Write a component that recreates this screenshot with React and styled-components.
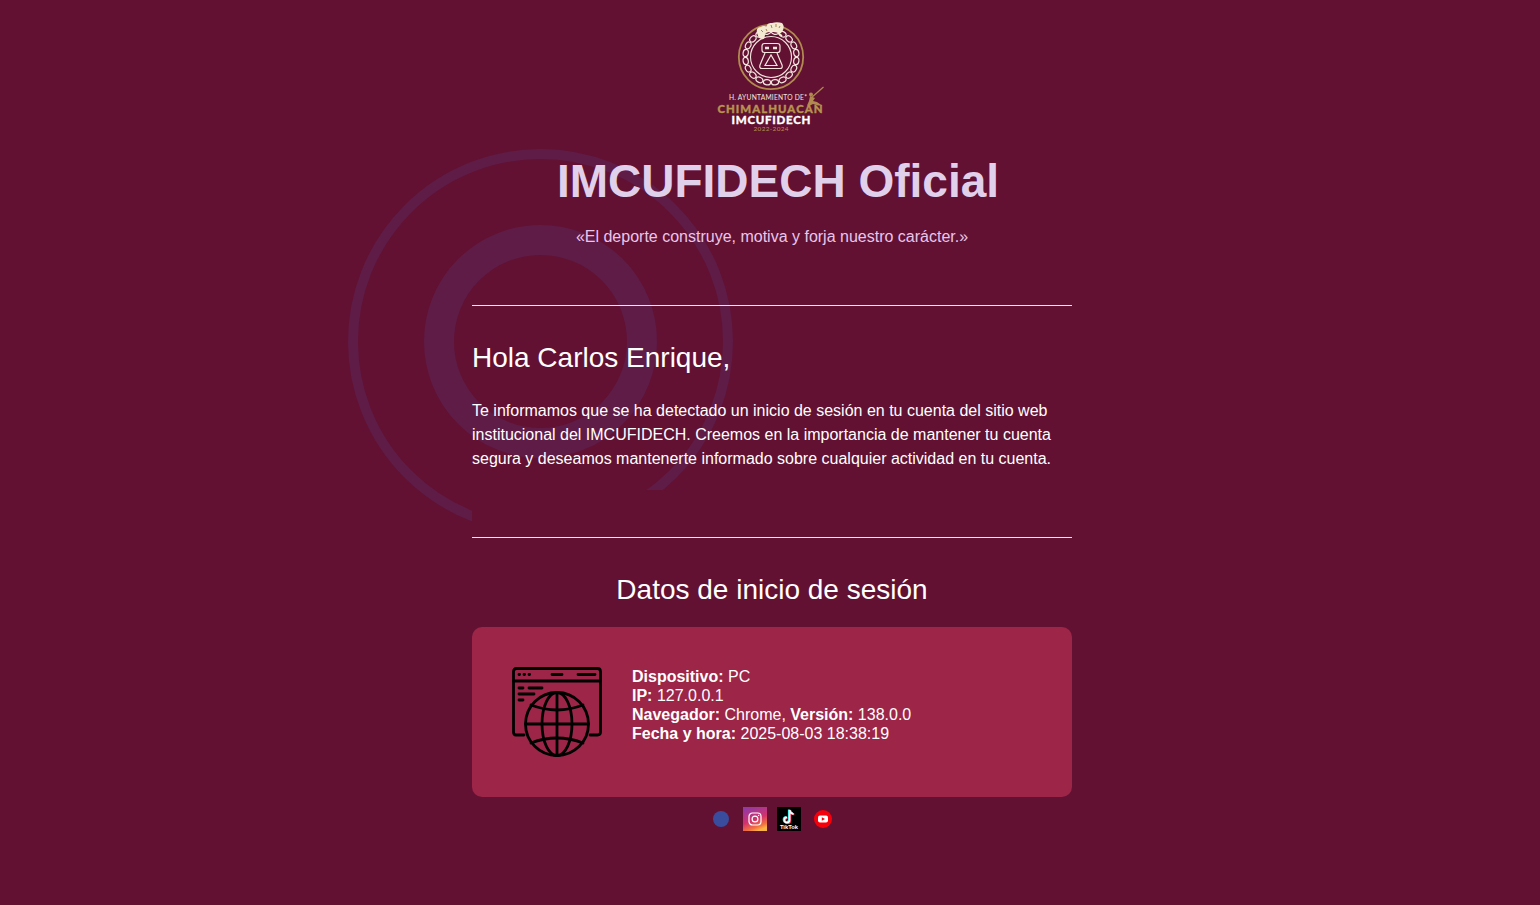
import React from 'react';
import styled, { createGlobalStyle } from 'styled-components';

const GlobalStyle = createGlobalStyle`
  html, body {
    margin: 0;
    padding: 0;
    background: #621132;
  }
  body {
    font-family: "Liberation Sans", Arial, sans-serif;
    color: #fff;
  }
`;

const LOGIN_ROWS = [
  [['Dispositivo:', ' PC']],
  [['IP:', ' 127.0.0.1']],
  [['Navegador:', ' Chrome, '], ['Versión:', ' 138.0.0']],
  [['Fecha y hora:', ' 2025-08-03 18:38:19']],
];

const CHAIN = Array.from({ length: 20 }, (_, i) => ((i + 0.5) * 2 * Math.PI) / 20);

const Logo = () => (
  <LogoSvg viewBox="0 0 110 114" aria-label="H. Ayuntamiento de Chimalhuacán">
    <circle cx="55" cy="37" r="32.2" fill="none" stroke="#b08a4e" strokeWidth="1.8" />
    <circle cx="55" cy="37" r="20.5" fill="none" stroke="#f3e6df" strokeWidth="1.1" />
    {CHAIN.map(a => (
      <ellipse
        key={a}
        cx={55 + 25.6 * Math.cos(a)}
        cy={37 + 25.6 * Math.sin(a)}
        rx="3.6"
        ry="2.6"
        fill="#621132"
        stroke="#f3e6df"
        strokeWidth="1.2"
        transform={`rotate(${(a * 180) / Math.PI + 90} ${55 + 25.6 * Math.cos(a)} ${37 + 25.6 * Math.sin(a)})`}
      />
    ))}
    {/* jaguar resting on the ring */}
    <path
      d="M41 13 C40 9 42 7 45 7 C47 5 49 7 51 6 C51 3 54 3 56 3 C59 2 63 2 66 3 C68 5 68 8 67 10 C66 13 64 14 62 13 C60 12 58 12 56 12 C53 12 51 12 49 14 C49 17 48 20 46 19 C43 19 42 16 41 13 Z"
      fill="#f4ead2"
    />
    <path d="M45 10 l2 2 M50 9 l1 2 M55 5 l1 3 M60 4 l0 3 M64 6 l-1 2" stroke="#a8834c" strokeWidth="1" />
    <path d="M62 13 L66 16" stroke="#f4ead2" strokeWidth="1.6" />
    <rect x="46" y="23.5" width="18" height="9" rx="2.6" fill="none" stroke="#f3e6df" strokeWidth="1.2" />
    <path d="M49 28 h4 M57 28 h4" stroke="#f3e6df" strokeWidth="2.4" />
    <path d="M49 33 L44 45 Q43 48.5 46 48.5 H64 Q67 48.5 66 45 L61 33" fill="none" stroke="#f3e6df" strokeWidth="1.2" />
    <path d="M55 35 L49 45.5 H61 Z" fill="none" stroke="#f3e6df" strokeWidth="1.2" />
    {/* figure with the pole, right of the name */}
    <path d="M107.5 67 L95 78" stroke="#b08a4e" strokeWidth="1.2" />
    <circle cx="95" cy="74.5" r="2" fill="#b08a4e" />
    <path d="M94 76 L99 78 L97 81 L101 82 L106 85.5 L102 85.5 L97 84 L94 85.5 L91 85.5 L93 81 Z" fill="#b08a4e" />
    <LogoText x="52" y="79.5" fontSize="6.7" fontWeight="400" fill="#f3e6df" textLength="78">
      H. AYUNTAMIENTO DE*
    </LogoText>
    <LogoText x="54" y="93" fontSize="11.4" fontWeight="900" fill="#b8924f" stroke="#b8924f" strokeWidth="0.35" textLength="105">
      CHIMALHUACAN
    </LogoText>
    <LogoText x="55" y="104" fontSize="11.5" fontWeight="900" fill="#ffffff" stroke="#ffffff" strokeWidth="0.3" textLength="79">
      IMCUFIDECH
    </LogoText>
    <LogoText x="55" y="111" fontSize="6.4" fontWeight="400" fill="#b8924f" textLength="35">
      2022-2024
    </LogoText>
  </LogoSvg>
);

const BrowserGlobe = () => (
  <GlobeSvg viewBox="0 0 90 92" fill="none" stroke="#000" strokeWidth="2.8" strokeLinecap="round">
    <path d="M12 69 H4 Q1.5 69 1.5 66 V5.5 Q1.5 2.5 4.5 2.5 H85.5 Q88.5 2.5 88.5 5.5 V66 Q88.5 69 85.5 69 H78" />
    <path d="M1.5 15 H88.5" />
    <path d="M7 8.5 H7.6 M12 8.5 H12.6 M17 8.5 H17.6 M40 8.5 H50 M66 8.5 H83" />
    <path d="M7 22 H11 M17 22 H30 M7 28 H22 M7 34 H11" />
    <circle cx="45" cy="58" r="31.5" />
    <ellipse cx="45" cy="58" rx="15" ry="31.5" />
    <path d="M45 26.5 V89.5 M13.5 58 H76.5" />
    <path d="M19 39 Q45 49 71 39 M19 77 Q45 67 71 77" />
  </GlobeSvg>
);

const Facebook = () => (
  <svg width="24" height="24" viewBox="0 0 24 24">
    <circle cx="12" cy="12" r="8" fill="#3a4c9e" />
  </svg>
);

const Instagram = () => (
  <svg width="24" height="24" viewBox="0 0 24 24">
    <defs>
      <linearGradient id="igGrad" x1="0.2" y1="0" x2="0.6" y2="1">
        <stop offset="0" stopColor="#8f3aa6" />
        <stop offset="0.55" stopColor="#d2326d" />
        <stop offset="0.85" stopColor="#f2733f" />
        <stop offset="1" stopColor="#fbb245" />
      </linearGradient>
    </defs>
    <rect width="24" height="24" fill="url(#igGrad)" />
    <rect x="6" y="6" width="12" height="12" rx="3.4" fill="none" stroke="#fff" strokeWidth="1.2" />
    <circle cx="12" cy="12" r="2.9" fill="none" stroke="#fff" strokeWidth="1.2" />
    <circle cx="15.6" cy="8.4" r="0.7" fill="#fff" />
  </svg>
);

const TikTok = () => (
  <svg width="24" height="24" viewBox="0 0 24 24">
    <rect width="24" height="24" fill="#000" />
    <path
      d="M12.6 3 V13 A2.6 2.6 0 1 1 10 10.4 M12.6 3 Q13.4 6.6 16.6 7"
      fill="none"
      stroke="#25f4ee"
      strokeWidth="2"
      transform="translate(-0.7 -0.4)"
    />
    <path
      d="M12.6 3 V13 A2.6 2.6 0 1 1 10 10.4 M12.6 3 Q13.4 6.6 16.6 7"
      fill="none"
      stroke="#fe2c55"
      strokeWidth="2"
      transform="translate(0.7 0.4)"
    />
    <path d="M12.6 3 V13 A2.6 2.6 0 1 1 10 10.4 M12.6 3 Q13.4 6.6 16.6 7" fill="none" stroke="#fff" strokeWidth="1.6" />
    <TikTokText x="12" y="22" fontSize="5.8" fontWeight="700" fill="#fff">
      TikTok
    </TikTokText>
  </svg>
);

const Youtube = () => (
  <svg width="24" height="24" viewBox="0 0 24 24">
    <circle cx="12" cy="12" r="9" fill="#f5000a" />
    <rect x="7" y="8.5" width="10" height="7" rx="2" fill="#fff" />
    <path d="M10.8 10.2 L14 12 L10.8 13.8 Z" fill="#f5000a" />
  </svg>
);

export default function App() {
  return (
    <Page>
      <GlobalStyle />
      <Shell>
        <Watermark viewBox="0 0 385 385" fill="none" stroke="#5f1c47">
          <circle cx="192.5" cy="192.5" r="187.5" strokeWidth="10" />
          <circle cx="192.5" cy="192.5" r="101.5" strokeWidth="30" />
        </Watermark>
        <Intro>
          <LogoRow>
            <Logo />
          </LogoRow>
          <Title>IMCUFIDECH Oficial</Title>
          <Quote>«El deporte construye, motiva y forja nuestro carácter.»</Quote>
          <Rule $spaced />
          <Greeting>Hola Carlos Enrique,</Greeting>
          <Message>
            Te informamos que se ha detectado un inicio de sesión en tu cuenta del sitio web
            institucional del IMCUFIDECH. Creemos en la importancia de mantener tu cuenta
            segura y deseamos mantenerte informado sobre cualquier actividad en tu cuenta.
          </Message>
        </Intro>
        <Details>
          <Rule />
          <DetailsTitle>Datos de inicio de sesión</DetailsTitle>
          <Card>
            <BrowserGlobe />
            <Info>
              {LOGIN_ROWS.map(row => (
                <div key={row[0][0]}>
                  {row.map(([label, value]) => (
                    <React.Fragment key={label}>
                      <strong>{label}</strong>
                      {value}
                    </React.Fragment>
                  ))}
                </div>
              ))}
            </Info>
          </Card>
          <Socials>
            <Facebook />
            <Instagram />
            <TikTok />
            <Youtube />
          </Socials>
        </Details>
      </Shell>
    </Page>
  );
}

const Page = styled.div`
  display: flex;
  justify-content: center;
  min-height: 905px;
  padding-left: 4px;
  box-sizing: border-box;
  overflow: hidden;
`;

const Shell = styled.div`
  position: relative;
  width: 600px;
`;

const Watermark = styled.svg`
  position: absolute;
  left: -124px;
  top: 149px;
  width: 385px;
  height: 385px;
`;

const Intro = styled.section`
  position: relative;
  height: 490px;
  padding-top: 20px;
  box-sizing: border-box;
`;

const LogoRow = styled.div`
  display: flex;
  justify-content: center;
  height: 114px;
`;

const LogoSvg = styled.svg`
  width: 110px;
  height: 114px;
  margin-left: -3px;
`;

const LogoText = styled.text`
  font-family: Lato, "Open Sans", sans-serif;
  text-anchor: middle;
`;

const Title = styled.h1`
  margin: 21px 0 0 12px;
  font-size: 46px;
  line-height: 53px;
  font-weight: 700;
  text-align: center;
  color: #e1d0ec;
`;

const Quote = styled.p`
  margin: 20px 0 0;
  font-size: 16px;
  line-height: 18px;
  text-align: center;
  color: #e8c6ec;
`;

const Rule = styled.hr`
  margin: ${({ $spaced }) => ($spaced ? '59px 0 0' : '0')};
  border: 0;
  height: 1px;
  background: #f3e6ec;
`;

const Greeting = styled.h2`
  margin: 36px 0 0;
  font-size: 28px;
  line-height: 32px;
  font-weight: 400;
  color: #fff;
`;

const Message = styled.p`
  margin: 25px 0 0;
  font-size: 16px;
  line-height: 24px;
  color: #fff;
`;

const Details = styled.section`
  position: relative;
  padding-top: 47px;
  background: #621132;
`;

const DetailsTitle = styled.h2`
  margin: 36px 0 0;
  font-size: 28px;
  line-height: 32px;
  font-weight: 400;
  text-align: center;
  color: #fff;
`;

const Card = styled.div`
  display: flex;
  align-items: center;
  gap: 30px;
  box-sizing: border-box;
  height: 170px;
  margin-top: 21px;
  padding: 0 40px;
  border-radius: 10px;
  background: #9c2548;
`;

const GlobeSvg = styled.svg`
  flex: none;
  width: 90px;
  height: 92px;
`;

const Info = styled.div`
  margin-bottom: 14px;
  font-size: 16px;
  line-height: 19px;
  color: #fff;
`;

const Socials = styled.div`
  display: flex;
  justify-content: center;
  gap: 10px;
  margin-top: 10px;
`;

const TikTokText = styled.text`
  font-family: "Liberation Sans", Arial, sans-serif;
  text-anchor: middle;
`;
